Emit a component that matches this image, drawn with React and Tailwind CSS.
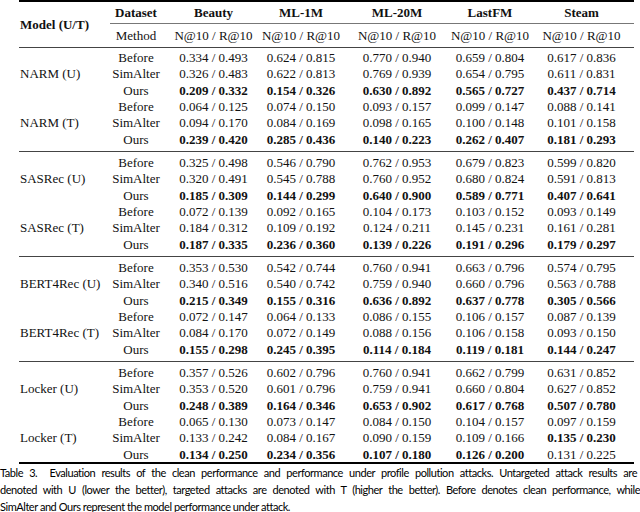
import React from "react";

const B = (s) => ({ v: s, b: true });
const N = (s) => ({ v: s, b: false });
const rowN = (...a) => a.map(N);
const rowB = (...a) => a.map(B);

const groups = [
  {
    u: {
      name: "NARM (U)",
      rows: [
        ["Before", rowN("0.334 / 0.493", "0.624 / 0.815", "0.770 / 0.940", "0.659 / 0.804", "0.617 / 0.836")],
        ["SimAlter", rowN("0.326 / 0.483", "0.622 / 0.813", "0.769 / 0.939", "0.654 / 0.795", "0.611 / 0.831")],
        ["Ours", rowB("0.209 / 0.332", "0.154 / 0.326", "0.630 / 0.892", "0.565 / 0.727", "0.437 / 0.714")],
      ],
    },
    t: {
      name: "NARM (T)",
      rows: [
        ["Before", rowN("0.064 / 0.125", "0.074 / 0.150", "0.093 / 0.157", "0.099 / 0.147", "0.088 / 0.141")],
        ["SimAlter", rowN("0.094 / 0.170", "0.084 / 0.169", "0.098 / 0.165", "0.100 / 0.148", "0.101 / 0.158")],
        ["Ours", rowB("0.239 / 0.420", "0.285 / 0.436", "0.140 / 0.223", "0.262 / 0.407", "0.181 / 0.293")],
      ],
    },
  },
  {
    u: {
      name: "SASRec (U)",
      rows: [
        ["Before", rowN("0.325 / 0.498", "0.546 / 0.790", "0.762 / 0.953", "0.679 / 0.823", "0.599 / 0.820")],
        ["SimAlter", rowN("0.320 / 0.491", "0.545 / 0.788", "0.760 / 0.952", "0.680 / 0.824", "0.591 / 0.813")],
        ["Ours", rowB("0.185 / 0.309", "0.144 / 0.299", "0.640 / 0.900", "0.589 / 0.771", "0.407 / 0.641")],
      ],
    },
    t: {
      name: "SASRec (T)",
      rows: [
        ["Before", rowN("0.072 / 0.139", "0.092 / 0.165", "0.104 / 0.173", "0.103 / 0.152", "0.093 / 0.149")],
        ["SimAlter", rowN("0.184 / 0.312", "0.109 / 0.192", "0.124 / 0.211", "0.145 / 0.231", "0.161 / 0.281")],
        ["Ours", rowB("0.187 / 0.335", "0.236 / 0.360", "0.139 / 0.226", "0.191 / 0.296", "0.179 / 0.297")],
      ],
    },
  },
  {
    u: {
      name: "BERT4Rec (U)",
      rows: [
        ["Before", rowN("0.353 / 0.530", "0.542 / 0.744", "0.760 / 0.941", "0.663 / 0.796", "0.574 / 0.795")],
        ["SimAlter", rowN("0.340 / 0.516", "0.540 / 0.742", "0.759 / 0.940", "0.660 / 0.796", "0.563 / 0.788")],
        ["Ours", rowB("0.215 / 0.349", "0.155 / 0.316", "0.636 / 0.892", "0.637 / 0.778", "0.305 / 0.566")],
      ],
    },
    t: {
      name: "BERT4Rec (T)",
      rows: [
        ["Before", rowN("0.072 / 0.147", "0.064 / 0.133", "0.086 / 0.155", "0.106 / 0.157", "0.087 / 0.139")],
        ["SimAlter", rowN("0.084 / 0.170", "0.072 / 0.149", "0.088 / 0.156", "0.106 / 0.158", "0.093 / 0.150")],
        ["Ours", rowB("0.155 / 0.298", "0.245 / 0.395", "0.114 / 0.184", "0.119 / 0.181", "0.144 / 0.247")],
      ],
    },
  },
  {
    u: {
      name: "Locker (U)",
      rows: [
        ["Before", rowN("0.357 / 0.526", "0.602 / 0.796", "0.760 / 0.941", "0.662 / 0.799", "0.631 / 0.852")],
        ["SimAlter", rowN("0.353 / 0.520", "0.601 / 0.796", "0.759 / 0.941", "0.660 / 0.804", "0.627 / 0.852")],
        ["Ours", rowB("0.248 / 0.389", "0.164 / 0.346", "0.653 / 0.902", "0.617 / 0.768", "0.507 / 0.780")],
      ],
    },
    t: {
      name: "Locker (T)",
      rows: [
        ["Before", rowN("0.065 / 0.130", "0.073 / 0.147", "0.084 / 0.150", "0.104 / 0.157", "0.097 / 0.159")],
        ["SimAlter", [N("0.133 / 0.242"), N("0.084 / 0.167"), N("0.090 / 0.159"), N("0.109 / 0.166"), B("0.135 / 0.230")]],
        ["Ours", [B("0.134 / 0.250"), B("0.234 / 0.356"), B("0.107 / 0.180"), B("0.126 / 0.200"), N("0.131 / 0.225")]],
      ],
    },
  },
];

function Sub({ data }) {
  return (
    <div className="flex">
      <div className="w-[85px] flex items-center pl-px">{data.name}</div>
      <div className="grid grid-cols-[64px_91px_84px_108px_78px_105px]">
        {data.rows.map(([m, vals]) => (
          <React.Fragment key={m}>
            <div className="h-[16.33px] flex items-center justify-center">{m}</div>
            {vals.map((c, i) => (
              <div
                key={i}
                className={
                  "h-[16.33px] flex items-center justify-center whitespace-nowrap " +
                  (c.b ? "font-bold" : "")
                }
              >
                {c.v}
              </div>
            ))}
          </React.Fragment>
        ))}
      </div>
    </div>
  );
}

export default function App() {
  return (
    <div className="w-[640px] h-[512px] bg-white text-black overflow-hidden">
      <div className="ml-[19px] w-[615px] [font-family:Liberation_Serif,Times_New_Roman,DejaVu_Serif,serif] text-[13px] leading-none text-[#111]">
        <div className="h-[1.5px] bg-black" />
        <div className="flex">
          <div className="w-[85px] flex items-center pl-px font-bold">Model (U/T)</div>
          <div className="flex flex-col">
            <div className="h-[21.5px] grid grid-cols-[64px_91px_84px_108px_78px_105px] font-bold">
              {["Dataset", "Beauty", "ML-1M", "ML-20M", "LastFM", "Steam"].map((h) => (
                <div key={h} className="flex items-center justify-center">{h}</div>
              ))}
            </div>
            <div className="ml-[6px] h-px bg-[#777]" />
            <div className="h-[22.5px] grid grid-cols-[64px_91px_84px_108px_78px_105px]">
              {["Method", "N@10 / R@10", "N@10 / R@10", "N@10 / R@10", "N@10 / R@10", "N@10 / R@10"].map((h, i) => (
                <div key={i} className="flex items-center justify-center whitespace-nowrap">{h}</div>
              ))}
            </div>
          </div>
        </div>
        <div className="h-px bg-[#444]" />
        {groups.map((g, gi) => (
          <React.Fragment key={gi}>
            <div className={gi < groups.length - 1 ? "pt-[2px] pb-[4px]" : "pt-[2px] pb-0"}>
              <Sub data={g.u} />
              <Sub data={g.t} />
            </div>
            {gi < groups.length - 1 ? (
              <div className="h-px bg-[#444]" />
            ) : (
              <div className="h-[1.5px] bg-black" />
            )}
          </React.Fragment>
        ))}
      </div>
      <div className="[font-family:Lato,sans-serif] text-[11px] tracking-[-0.45px] leading-[17px] text-black">
        <div className="whitespace-nowrap text-justify [text-align-last:justify] pr-[3px]">
          Table 3.&nbsp; Evaluation results of the clean performance and performance under profile pollution attacks. Untargeted attack results are
        </div>
        <div className="whitespace-nowrap text-justify [text-align-last:justify]">
          denoted with U (lower the better), targeted attacks are denoted with T (higher the better). Before denotes clean performance, while
        </div>
        <div className="whitespace-nowrap">
          SimAlter and Ours represent the model performance under attack.
        </div>
      </div>
    </div>
  );
}
